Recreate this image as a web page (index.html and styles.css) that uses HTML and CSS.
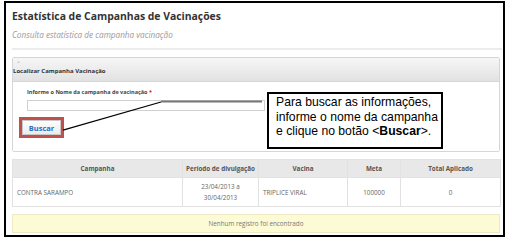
FILE: index.html
```html
<!DOCTYPE html>
<html lang="pt">
<head>
    <meta charset="UTF-8">
    <title>Estatística de Campanhas de Vacinações</title>
    <link rel="stylesheet" href="styles.css">
</head>
<body>
    <div class="frame">
        <h1 class="page-title">Estatística de Campanhas de Vacinações</h1>
        <p class="page-sub">Consulta estatística de campanha vacinação</p>
        <hr class="divider">

        <div class="panel">
            <div class="panel-head">
                <span class="toggle">&gt;</span>
                <span class="panel-title">Localizar Campanha Vacinação</span>
            </div>
            <div class="panel-body">
                <label class="field-label">Informe o Nome da campanha de vacinação <span class="req">*</span></label>
                <input class="field" type="text">
                <button class="btn-search" type="button">Buscar</button>
            </div>
        </div>

        <table class="grid">
            <thead>
                <tr>
                    <th class="c-camp">Campanha</th>
                    <th class="c-per">Período de divulgação</th>
                    <th class="c-vac">Vacina</th>
                    <th class="c-meta">Meta</th>
                    <th class="c-tot">Total Aplicado</th>
                </tr>
            </thead>
            <tbody>
                <tr>
                    <td>CONTRA SARAMPO</td>
                    <td class="center">23/04/2013 a<br>30/04/2013</td>
                    <td>TRIPLICE VIRAL</td>
                    <td class="center">100000</td>
                    <td class="center">0</td>
                </tr>
            </tbody>
        </table>

        <div class="empty">Nenhum registro foi encontrado</div>

        <!-- anotação: linha do balão até o botão -->
        <svg class="pointer" width="497" height="231" viewBox="0 0 497 231">
            <line x1="57" y1="127" x2="155" y2="99" stroke="#000" stroke-width="1.3"/>
            <line x1="155" y1="98.5" x2="256" y2="98.5" stroke="#777" stroke-width="2"/>
        </svg>
        <div class="callout">
            Para buscar as informações,<br>
            informe o nome da campanha<br>
            e clique no botão &lt;<b>Buscar</b>&gt;.
        </div>
    </div>
</body>
</html>
```

FILE: styles.css
```css
body {
    margin: 0;
    padding: 0;
    background: #fff;
    font-family: 'Open Sans', 'DejaVu Sans', sans-serif;
}
.frame {
    position: relative;
    box-sizing: border-box;
    width: 501px;
    height: 236px;
    margin: 1px 0 0 4px;
    padding: 4px 3px 0 6px;
    border: 2px solid #000;
    background: #fff;
}
.page-title {
    margin: 0;
    font-size: 10.4px;
    line-height: 18px;
    font-weight: 700;
    color: #333;
}
.page-sub {
    margin: 4px 0 0 0;
    font-size: 8.2px;
    line-height: 12px;
    font-style: italic;
    color: #999;
}
.divider {
    margin: 7px -2px 0 0;
    height: 2px;
    border: none;
    background: #ececec;
}
.panel {
    margin-top: 7px;
    border: 1px solid #d6d6d6;
    border-radius: 2px;
}
.panel-head {
    box-sizing: border-box;
    height: 24px;
    display: flex;
    flex-direction: column;
    background: linear-gradient(#f6f6f6, #e2e2e2);
    border-bottom: 1px solid #d6d6d6;
}
.toggle {
    font-size: 5px;
    line-height: 8px;
    color: #999;
    margin-left: 4px;
}
.panel-title {
    font-size: 6px;
    line-height: 10px;
    font-weight: 700;
    color: #333;
}
.panel-body {
    display: flex;
    flex-direction: column;
    align-items: flex-start;
    padding: 5px 0 16px 14px;
    background: #fff;
}
.field-label {
    font-size: 5.5px;
    line-height: 10px;
    font-weight: 700;
    color: #444;
}
.req {
    color: #e02020;
}
.field {
    box-sizing: border-box;
    width: 238px;
    height: 11px;
    margin: 3px 0 0 0;
    padding: 0;
    border: 1px solid #d0d0d0;
    background: #fff;
}
.btn-search {
    box-sizing: border-box;
    width: 39px;
    height: 15px;
    margin: 9px 0 0 -5px;
    padding: 0;
    border: 1px solid #c8c8c8;
    background: linear-gradient(#fdfdfd, #ececec);
    font-family: 'Open Sans', 'DejaVu Sans', sans-serif;
    font-size: 7.5px;
    font-weight: 700;
    color: #2b6cc4;
    outline: 3px solid #c0504d;
}
.grid {
    width: 488px;
    margin-top: 7px;
    border-collapse: collapse;
    table-layout: fixed;
    font-size: 6.3px;
    color: #666;
}
.grid th, .grid td {
    box-sizing: border-box;
    border: 1px solid #e2e2e2;
    padding: 0 4px;
}
.grid th {
    height: 18px;
    padding: 0 1px;
    background: #e8e8e8;
    font-weight: 700;
    color: #555;
    text-align: center;
    white-space: nowrap;
}
.grid td {
    height: 29px;
    line-height: 11px;
}
.grid .center {
    text-align: center;
}
.c-camp { width: 170px; }
.c-per { width: 76px; }
.c-vac { width: 89px; }
.c-meta { width: 53px; }
.c-tot { width: 100px; }
.empty {
    box-sizing: border-box;
    height: 19px;
    margin-top: 7px;
    width: 488px;
    border: 1px solid #efeac4;
    background: #fdfbd6;
    font-size: 6.3px;
    line-height: 17px;
    text-align: center;
    color: #777;
}
.pointer {
    position: absolute;
    left: 0;
    top: 0;
}
.callout {
    position: absolute;
    left: 261px;
    top: 89px;
    box-sizing: border-box;
    width: 176px;
    height: 57px;
    padding: 1px 0 0 7px;
    border: 2px solid #000;
    background: #fff;
    font-family: 'Liberation Sans', Arial, sans-serif;
    font-size: 12.2px;
    line-height: 14.5px;
    white-space: nowrap;
    color: #000;
}
```
